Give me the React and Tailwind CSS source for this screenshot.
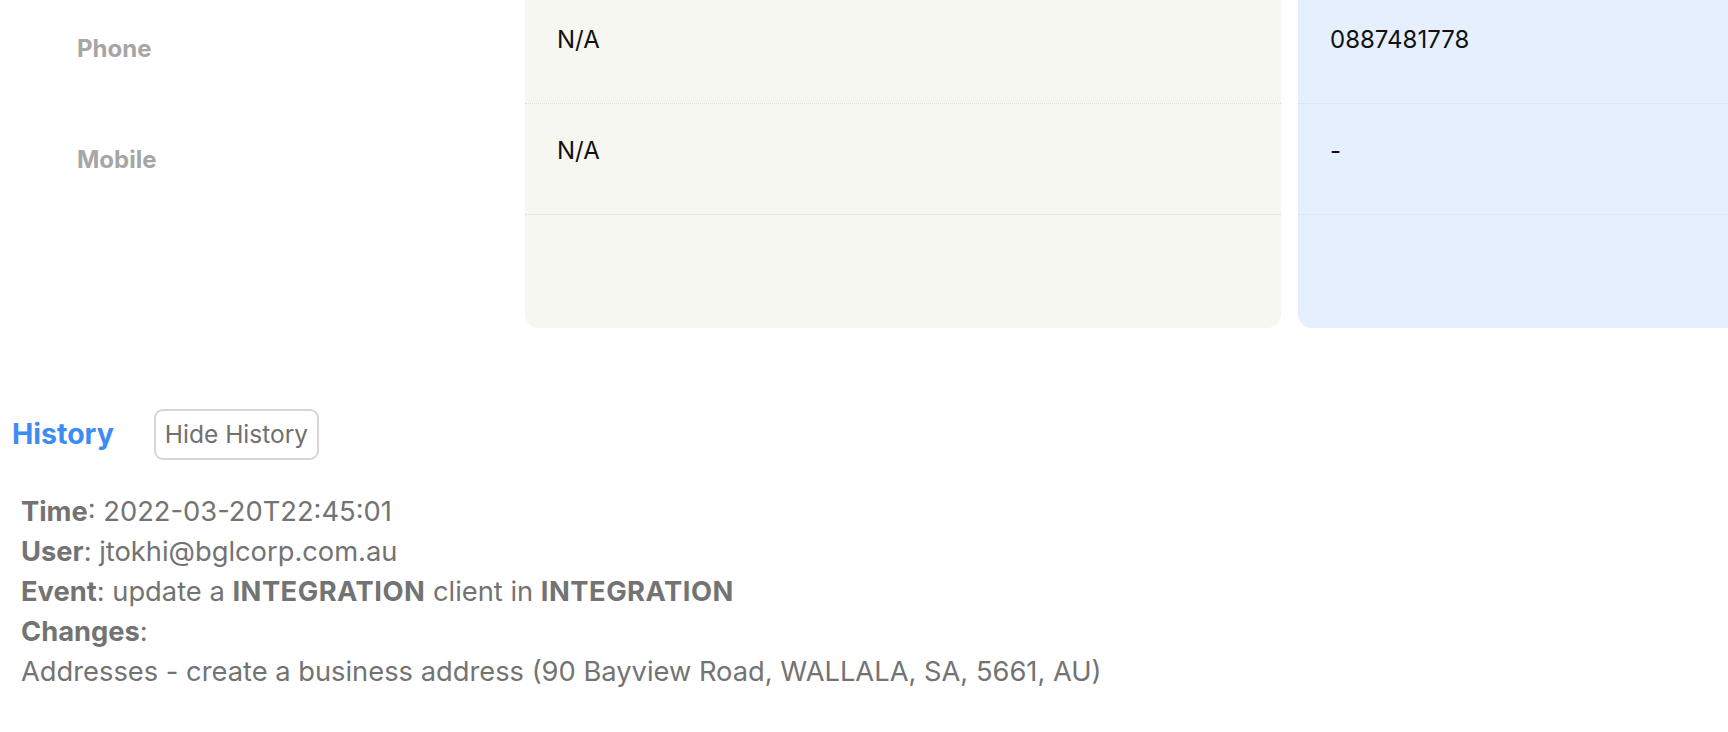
import React from "react";

const rows = [
  { label: "Phone", left: "N/A", right: "0887481778" },
  { label: "Mobile", left: "N/A", right: "-" },
];

function Column({ values, className }) {
  return (
    <div className={className}>
      {values.map((v, i) => (
        <div
          key={i}
          className="h-[111px] border-b border-dotted border-[#dcddd6] pl-[32px] pt-[35px] text-[24px] leading-[24px] text-[#111]"
        >
          {v}
        </div>
      ))}
      <div className="h-[113px]" />
    </div>
  );
}

export default function App() {
  return (
    <div className="w-[1728px] h-[732px] overflow-hidden bg-white font-['Inter',sans-serif]">
      {/* details table, scrolled a little */}
      <div className="-mt-[7px] flex">
        <div className="w-[525px] shrink-0">
          {rows.map((r) => (
            <div
              key={r.label}
              className="h-[111px] flex items-center pl-[77px] text-[24px] font-bold text-[#a6a6a6]"
            >
              {r.label}
            </div>
          ))}
        </div>
        <Column
          values={rows.map((r) => r.left)}
          className="w-[756px] shrink-0 bg-[#f7f7f1] rounded-b-[14px]"
        />
        <Column
          values={rows.map((r) => r.right)}
          className="ml-[17px] w-[756px] shrink-0 bg-[#e5effe] rounded-b-[14px]"
        />
      </div>

      {/* history */}
      <div className="mt-[81px] flex items-center gap-[40px] pl-[12px]">
        <h2 className="text-[28.5px] font-bold text-[#3d8bf5]">History</h2>
        <button className="h-[51px] px-[9px] border-2 border-[#d6d6d6] rounded-[9px] text-[24.5px] text-[#707070]">
          Hide History
        </button>
      </div>

      <div className="mt-[32px] pl-[21px] text-[27.3px] leading-[40px] text-[#737373]">
        <div>
          <b>Time</b>: 2022-03-20T22:45:01
        </div>
        <div>
          <b>User</b>: jtokhi@bglcorp.com.au
        </div>
        <div>
          <b>Event</b>: update a <b className="tracking-[0.5px]">INTEGRATION</b> client in{" "}
          <b className="tracking-[0.5px]">INTEGRATION</b>
        </div>
        <div>
          <b>Changes</b>:
        </div>
        <div>Addresses - create a business address (90 Bayview Road, WALLALA, SA, 5661, AU)</div>
      </div>
    </div>
  );
}
